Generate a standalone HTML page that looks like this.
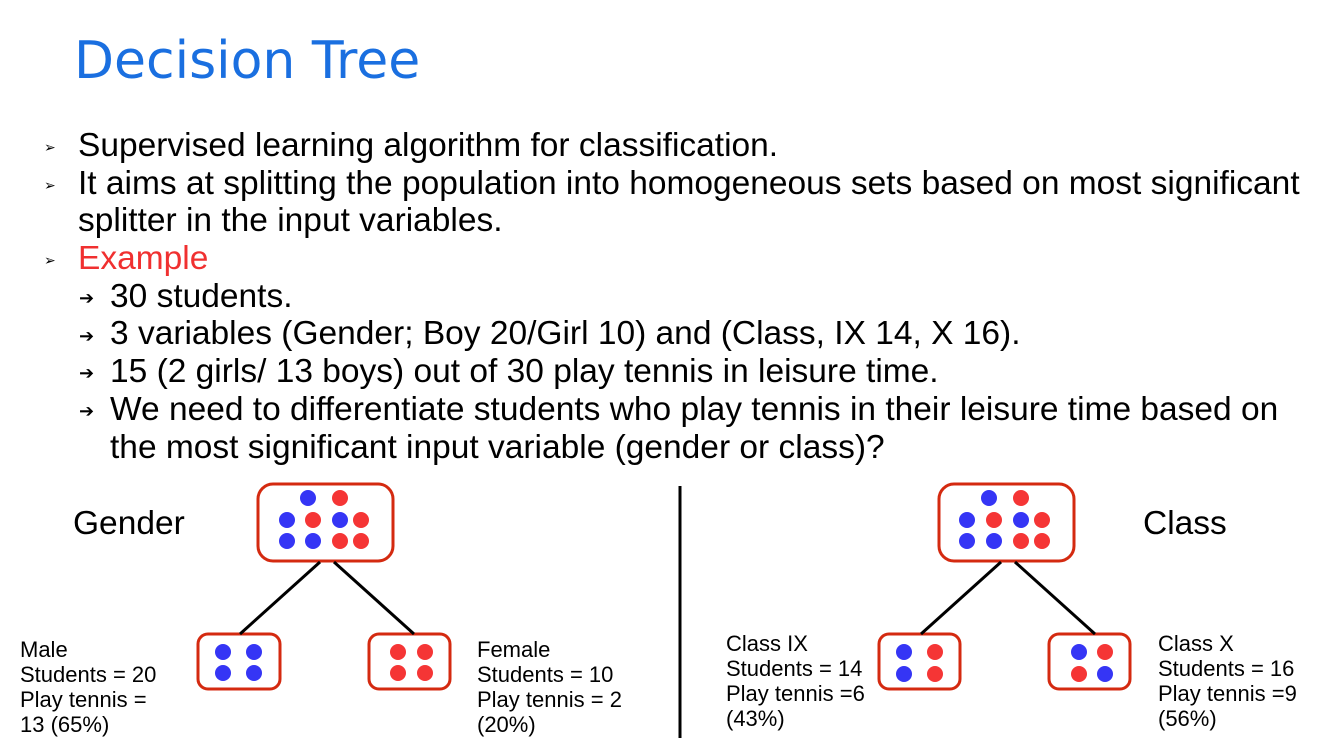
<!DOCTYPE html>
<html><head><meta charset="utf-8"><style>
body{margin:0;width:1323px;height:738px;background:#fff;position:relative;overflow:hidden;font-family:"Liberation Sans",sans-serif;}
.t{position:absolute;white-space:nowrap;}
.title{left:74px;top:31px;font-family:"DejaVu Sans",sans-serif;font-size:52px;color:#1a6fe0;}
.b{font-size:33.5px;color:#000;}
.b div{height:37.7px;line-height:37.7px;}
.m{display:inline-block;width:34px;font-size:14px;line-height:0;vertical-align:middle;}
.a{display:inline-block;width:31px;font-size:18px;line-height:0;vertical-align:middle;}
.s{font-size:22px;line-height:25px;color:#000;}
</style></head><body>
<div class="t title">Decision Tree</div>
<div class="t b" style="left:44px;top:127px">
<div><span class="m">➢</span>Supervised learning algorithm for classification.</div>
<div><span class="m">➢</span>It aims at splitting the population into homogeneous sets based on most significant</div>
<div style="padding-left:34px">splitter in the input variables.</div>
<div><span class="m">➢</span><span style="color:#f03030">Example</span></div>
<div style="padding-left:35px"><span class="a">➔</span>30 students.</div>
<div style="padding-left:35px"><span class="a">➔</span>3 variables (Gender; Boy 20/Girl 10) and (Class, IX 14, X 16).</div>
<div style="padding-left:35px"><span class="a">➔</span>15 (2 girls/ 13 boys) out of 30 play tennis in leisure time.</div>
<div style="padding-left:35px"><span class="a">➔</span>We need to differentiate students who play tennis in their leisure time based on</div>
<div style="padding-left:66px">the most significant input variable (gender or class)?</div>
</div>
<div class="t" style="left:73px;top:505px;font-size:33.5px">Gender</div>
<div class="t" style="left:1143px;top:505px;font-size:33.5px">Class</div>
<div class="t s" style="left:20px;top:637px">Male<br>Students = 20<br>Play tennis =<br>13 (65%)</div>
<div class="t s" style="left:477px;top:637px">Female<br>Students = 10<br>Play tennis = 2<br>(20%)</div>
<div class="t s" style="left:726px;top:631px">Class IX<br>Students = 14<br>Play tennis =6<br>(43%)</div>
<div class="t s" style="left:1158px;top:631px">Class X<br>Students = 16<br>Play tennis =9<br>(56%)</div>
<svg width="1323" height="738" style="position:absolute;left:0;top:0">
<g fill="none" stroke="#d42a10" stroke-width="3">
<rect x="258" y="484" width="135" height="77" rx="15"/>
<rect x="198" y="634" width="82" height="55" rx="10"/>
<rect x="369" y="634" width="81" height="55" rx="10"/>
<rect x="939" y="484" width="135" height="77" rx="15"/>
<rect x="879" y="634" width="81" height="55" rx="10"/>
<rect x="1049" y="634" width="81" height="55" rx="10"/>
</g>
<g stroke="#000" stroke-width="3">
<line x1="320" y1="562" x2="240" y2="634"/><line x1="334" y1="562" x2="414" y2="634"/>
<line x1="1001" y1="562" x2="921" y2="634"/><line x1="1015" y1="562" x2="1095" y2="634"/>
<line x1="680" y1="486" x2="680" y2="738"/>
</g>
<g fill="#3535f5">
<circle cx="308" cy="498" r="8"/><circle cx="287" cy="520" r="8"/><circle cx="340" cy="520" r="8"/><circle cx="287" cy="541" r="8"/><circle cx="313" cy="541" r="8"/>
<circle cx="223" cy="652" r="8"/><circle cx="254" cy="652" r="8"/><circle cx="223" cy="673" r="8"/><circle cx="254" cy="673" r="8"/>
<circle cx="989" cy="498" r="8"/><circle cx="967" cy="520" r="8"/><circle cx="1021" cy="520" r="8"/><circle cx="967" cy="541" r="8"/><circle cx="994" cy="541" r="8"/>
<circle cx="904" cy="652" r="8"/><circle cx="904" cy="674" r="8"/>
<circle cx="1079" cy="652" r="8"/><circle cx="1105" cy="674" r="8"/>
</g>
<g fill="#f53535">
<circle cx="340" cy="498" r="8"/><circle cx="313" cy="520" r="8"/><circle cx="361" cy="520" r="8"/><circle cx="340" cy="541" r="8"/><circle cx="361" cy="541" r="8"/>
<circle cx="398" cy="652" r="8"/><circle cx="425" cy="652" r="8"/><circle cx="398" cy="673" r="8"/><circle cx="425" cy="673" r="8"/>
<circle cx="1021" cy="498" r="8"/><circle cx="994" cy="520" r="8"/><circle cx="1042" cy="520" r="8"/><circle cx="1021" cy="541" r="8"/><circle cx="1042" cy="541" r="8"/>
<circle cx="935" cy="652" r="8"/><circle cx="935" cy="674" r="8"/>
<circle cx="1105" cy="652" r="8"/><circle cx="1079" cy="674" r="8"/>
</g>
</svg>
</body></html>
